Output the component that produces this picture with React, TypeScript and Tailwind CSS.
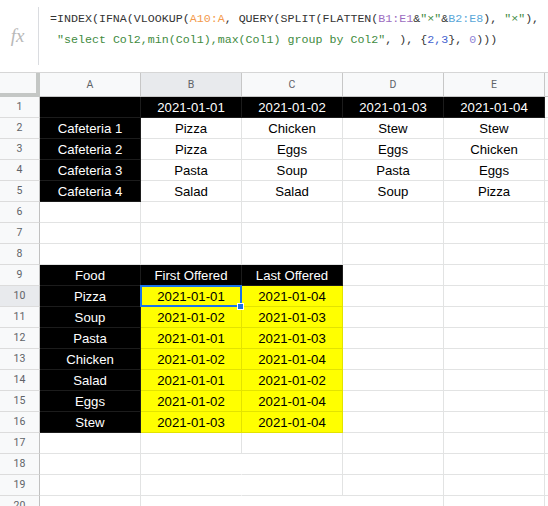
type Kind = 'b' | 'y' | 'w'

const kindCls: Record<Kind, string> = {
  b: 'bg-black text-white border-[#1c1c1c]',
  y: 'bg-[#ffff00] text-black border-[#e3e300]',
  w: 'bg-white text-black border-[#e2e3e3]',
}

type CellDef = { t?: string; k?: Kind; noR?: boolean; sel?: boolean }

const dates = ['2021-01-01', '2021-01-02', '2021-01-03', '2021-01-04']

const rows: CellDef[][] = [
  [{ k: 'b' }, ...dates.map((d) => ({ t: d, k: 'b' as Kind }))],
  [{ t: 'Cafeteria 1', k: 'b' }, { t: 'Pizza' }, { t: 'Chicken' }, { t: 'Stew' }, { t: 'Stew' }],
  [{ t: 'Cafeteria 2', k: 'b' }, { t: 'Pizza' }, { t: 'Eggs' }, { t: 'Eggs' }, { t: 'Chicken' }],
  [{ t: 'Cafeteria 3', k: 'b' }, { t: 'Pasta' }, { t: 'Soup' }, { t: 'Pasta' }, { t: 'Eggs' }],
  [{ t: 'Cafeteria 4', k: 'b' }, { t: 'Salad' }, { t: 'Salad' }, { t: 'Soup' }, { t: 'Pizza' }],
  [{}, {}, {}, {}, {}],
  [{}, {}, {}, {}, {}],
  [{}, {}, {}, {}, {}],
  [{ t: 'Food', k: 'b' }, { t: 'First Offered', k: 'b' }, { t: 'Last Offered', k: 'b' }, {}, {}],
  [{ t: 'Pizza', k: 'b' }, { t: '2021-01-01', k: 'y', sel: true }, { t: '2021-01-04', k: 'y' }, {}, {}],
  [{ t: 'Soup', k: 'b' }, { t: '2021-01-02', k: 'y' }, { t: '2021-01-03', k: 'y' }, {}, {}],
  [{ t: 'Pasta', k: 'b' }, { t: '2021-01-01', k: 'y' }, { t: '2021-01-03', k: 'y' }, {}, {}],
  [{ t: 'Chicken', k: 'b' }, { t: '2021-01-02', k: 'y' }, { t: '2021-01-04', k: 'y' }, {}, {}],
  [{ t: 'Salad', k: 'b' }, { t: '2021-01-01', k: 'y' }, { t: '2021-01-02', k: 'y' }, {}, {}],
  [{ t: 'Eggs', k: 'b' }, { t: '2021-01-02', k: 'y' }, { t: '2021-01-04', k: 'y' }, {}, {}],
  [{ t: 'Stew', k: 'b' }, { t: '2021-01-03', k: 'y' }, { t: '2021-01-04', k: 'y' }, {}, {}],
  [{}, {}, {}, {}, {}],
  [{}, { noR: true }, {}, {}, {}],
  [{}, { noR: true }, {}, {}, {}],
  [{}, { noR: true }, { noR: true }, {}, {}],
]

const Cell = ({ t, k = 'w', noR, sel }: CellDef) => (
  <div
    className={`relative w-[101px] h-[21px] shrink-0 border-r border-b flex items-center justify-center leading-[20px] pt-px text-[13.2px] ${kindCls[k]} ${noR ? 'border-r-white' : ''}`}
  >
    {t}
    {sel && (
      <>
        <div className="absolute -top-px -left-px w-[102px] h-[22px] border-2 border-[#1a73e8] z-10" />
        <div className="absolute top-[17px] left-[96px] w-[7px] h-[7px] bg-[#1a73e8] border border-white z-20" />
      </>
    )}
  </div>
)

const F = ({ c, children }: { c: string; children: string }) => <span className={c}>{children}</span>

export default function App() {
  const dark = 'text-[#333]'
  const str = 'text-[#3f8b3f]'
  return (
    <div className="w-[548px] h-[506px] overflow-hidden bg-white font-['Liberation_Sans',Arial,sans-serif]">
      {/* formula bar */}
      <div className="flex h-[73px] border-b border-[#d6d6d6]">
        <div className="w-[39px] my-[7px] border-r border-[#dadce0] flex items-center justify-center">
          <span className="font-['Liberation_Serif',serif] italic text-[19px] text-[#b8b8b8] mr-[3px]">fx</span>
        </div>
        <div className="pl-[11px] pt-[8px] font-['Liberation_Mono',monospace] text-[11.65px] leading-[21px] whitespace-pre text-[#333]">
          <div>
            <F c={dark}>=INDEX(IFNA(VLOOKUP(</F>
            <F c="text-[#f39a4c]">A10:A</F>
            <F c={dark}>, QUERY(SPLIT(FLATTEN(</F>
            <F c="text-[#9c6cc0]">B1:E1</F>
            <F c={dark}>&</F>
            <F c={str}>"×"</F>
            <F c={dark}>&</F>
            <F c="text-[#5aa7d9]">B2:E8</F>
            <F c={dark}>), </F>
            <F c={str}>"×"</F>
            <F c={dark}>),</F>
          </div>
          <div>
            <F c={dark}> </F>
            <F c={str}>"select Col2,min(Col1),max(Col1) group by Col2"</F>
            <F c={dark}>, ), {'{'}</F>
            <F c="text-[#3f5fcf]">2,3</F>
            <F c={dark}>{'}'}, </F>
            <F c="text-[#8f84d6]">0</F>
            <F c={dark}>)))</F>
          </div>
        </div>
      </div>

      {/* column headers */}
      <div className="flex h-[24px] text-[10.5px] text-[#5f6368] font-['Roboto',sans-serif]">
        <div className="w-[40px] shrink-0 bg-[#f8f9fa] border-r-4 border-b-4 border-[#c4c7c5]" />
        {['A', 'B', 'C', 'D', 'E'].map((l) => (
          <div
            key={l}
            className={`w-[101px] shrink-0 border-r border-b border-[#c7c7c7] flex items-center justify-center ${l === 'B' ? 'bg-[#e8eaed]' : 'bg-[#f8f9fa]'}`}
          >
            {l}
          </div>
        ))}
        <div className="flex-1 bg-[#f8f9fa] border-b border-[#c7c7c7]" />
      </div>

      {/* rows */}
      {rows.map((r, i) => (
        <div key={i} className="flex">
          <div
            className={`w-[40px] h-[21px] shrink-0 border-r border-b border-r-[#c0c0c0] border-b-[#dcdcdc] flex items-center justify-center text-[10.5px] text-[#5f6368] font-['Roboto',sans-serif] ${i === 9 ? 'bg-[#e8eaed]' : 'bg-[#f8f9fa]'}`}
          >
            {i + 1}
          </div>
          {r.map((c, j) => (
            <Cell key={j} {...c} />
          ))}
          <div className="flex-1 h-[21px] border-b border-[#e2e3e3]" />
        </div>
      ))}
    </div>
  )
}
